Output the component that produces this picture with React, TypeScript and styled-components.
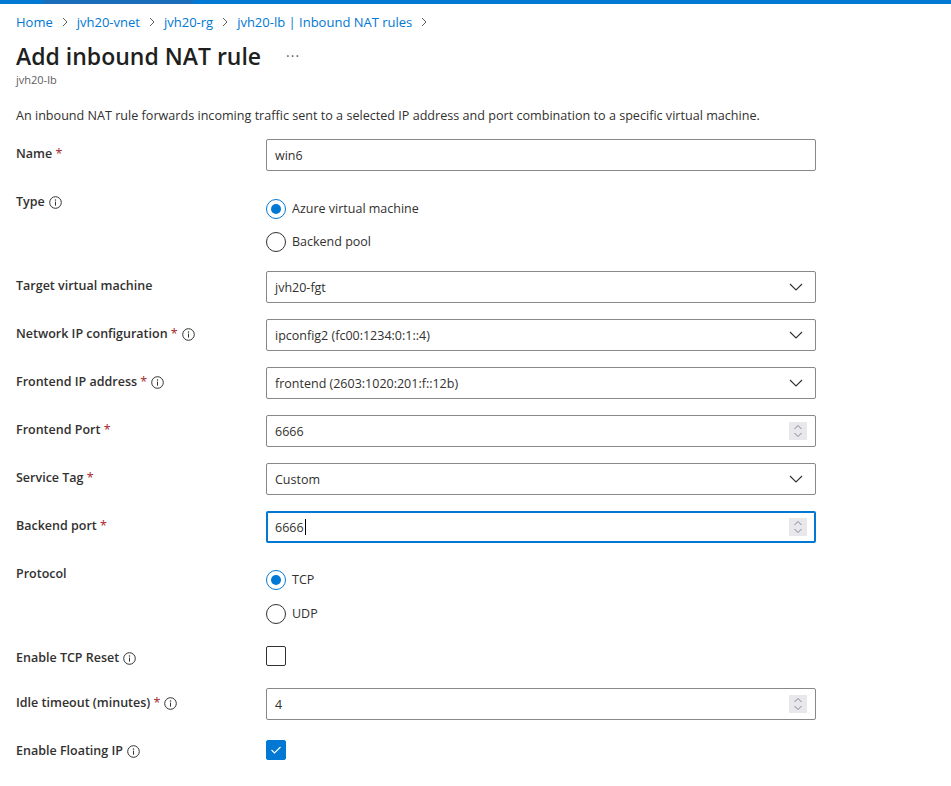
import React from "react";
import styled, { createGlobalStyle } from "styled-components";

const Global = createGlobalStyle`
  html, body { margin: 0; padding: 0; background: #fff; }
  body { font-family: "Segoe UI", "Open Sans", sans-serif; color: #323130; }
  * { box-sizing: border-box; }
`;

const TopBar = styled.div`
  height: 4px;
  background: #0078d4;
  display: flex;
`;
const Progress = styled.div`
  margin-left: 43px;
  width: 150px;
  background: #1a6dbb;
`;

const Page = styled.div`
  padding: 0 16px;
`;

const Crumbs = styled.nav`
  margin-top: 8px;
  height: 20px;
  display: flex;
  align-items: center;
  gap: 8px;
  font-size: 13px;
  line-height: 20px;
`;
const Crumb = styled.span`
  color: #0078d4;
`;
const Sep = styled.svg`
  width: 8px;
  height: 10px;
  flex: none;
`;

const TitleRow = styled.div`
  margin-top: 8px;
  display: flex;
  align-items: center;
  height: 32px;
`;
const Title = styled.h1`
  margin: 0;
  font-size: 23px;
  font-weight: 600;
  line-height: 32px;
  color: #201f1e;
`;
const More = styled.span`
  margin-left: 25px;
  font-size: 14px;
  color: #605e5c;
  letter-spacing: 1px;
  line-height: 20px;
  position: relative;
  top: -4px;
`;
const Sub = styled.div`
  font-size: 11px;
  line-height: 16px;
  color: #605e5c;
`;
const Desc = styled.p`
  margin: 18px 0 0;
  font-size: 12.6px;
  line-height: 20px;
  color: #323130;
`;

const Form = styled.div`
  margin-top: 13px;
  display: grid;
  grid-template-columns: 250px 550px;
  row-gap: 16px;
`;
const Label = styled.div`
  padding-top: 5px;
  font-size: 12.5px;
  line-height: 20px;
  font-weight: 600;
  color: #323130;
  display: flex;
  align-items: center;
  gap: 4px;
  align-self: start;
`;
const Req = styled.span`
  color: #a4262c;
  font-weight: 400;
`;

const Field = styled.div<{ $focus?: boolean }>`
  height: 32px;
  border: ${(p) => (p.$focus ? "2px solid #0078d4" : "1px solid #8a8886")};
  border-radius: 2px;
  display: flex;
  align-items: center;
  padding: 0 ${(p) => (p.$focus ? "7px" : "8px")};
  font-size: 12.5px;
  color: #323130;
`;
const Value = styled.span`
  flex: 1;
  display: flex;
  align-items: center;
`;
const Caret = styled.span`
  display: inline-block;
  width: 1px;
  height: 16px;
  background: #000;
  margin-left: 1px;
`;
const Spin = styled.span`
  width: 18px;
  height: 18px;
  background: #e8e8ec;
  display: flex;
  align-items: center;
  justify-content: center;
`;
const Chevron = styled.svg`
  width: 14px;
  height: 8px;
  margin-right: 4px;
`;

const RadioGroup = styled.div<{ $top: number; $gap: number; $bottom: number }>`
  padding-top: ${(p) => p.$top}px;
  padding-bottom: ${(p) => p.$bottom}px;
  display: flex;
  flex-direction: column;
  gap: ${(p) => p.$gap}px;
`;
const RadioItem = styled.label`
  display: flex;
  align-items: center;
  gap: 6px;
  font-size: 12.5px;
  line-height: 20px;
  color: #323130;
`;
const RadioDot = styled.span<{ $on?: boolean }>`
  width: 20px;
  height: 20px;
  border-radius: 50%;
  border: 1px solid ${(p) => (p.$on ? "#0078d4" : "#323130")};
  display: flex;
  align-items: center;
  justify-content: center;
  &::after {
    content: "";
    width: 10px;
    height: 10px;
    border-radius: 50%;
    background: ${(p) => (p.$on ? "#0078d4" : "transparent")};
  }
`;

const CheckWrap = styled.div<{ $top: number; $bottom: number }>`
  padding-top: ${(p) => p.$top}px;
  padding-bottom: ${(p) => p.$bottom}px;
`;
const Box = styled.span<{ $on?: boolean }>`
  width: 20px;
  height: 20px;
  border-radius: 2px;
  border: 1px solid ${(p) => (p.$on ? "#0078d4" : "#323130")};
  background: ${(p) => (p.$on ? "#0078d4" : "#fff")};
  display: flex;
  align-items: center;
  justify-content: center;
`;

const Info = () => (
  <svg width="13" height="13" viewBox="0 0 13 13" style={{ flex: "none" }}>
    <circle cx="6.5" cy="6.5" r="5.8" fill="none" stroke="#323130" strokeWidth="1" />
    <circle cx="6.5" cy="4" r="0.75" fill="#323130" />
    <rect x="6" y="5.6" width="1" height="4" fill="#323130" />
  </svg>
);

const SepIcon = () => (
  <Sep viewBox="0 0 8 10">
    <path d="M2 1 L6 5 L2 9" fill="none" stroke="#605e5c" strokeWidth="1" />
  </Sep>
);

const Down = () => (
  <Chevron viewBox="0 0 14 8">
    <path d="M1 1 L7 7 L13 1" fill="none" stroke="#323130" strokeWidth="1.1" />
  </Chevron>
);

const Spinner = () => (
  <Spin>
    <svg width="10" height="14" viewBox="0 0 10 14">
      <path d="M1.5 5 L5 1.5 L8.5 5" fill="none" stroke="#8a8886" strokeWidth="1" />
      <path d="M1.5 9 L5 12.5 L8.5 9" fill="none" stroke="#8a8886" strokeWidth="1" />
    </svg>
  </Spin>
);

type LabelProps = { text: string; req?: boolean; info?: boolean };
const FieldLabel = ({ text, req, info }: LabelProps) => (
  <Label>
    <span>
      {text}
      {req && <Req> *</Req>}
    </span>
    {info && <Info />}
  </Label>
);

export default function App() {
  return (
    <>
      <Global />
      <TopBar>
        <Progress />
      </TopBar>
      <Page>
        <Crumbs>
          <Crumb>Home</Crumb>
          <SepIcon />
          <Crumb>jvh20-vnet</Crumb>
          <SepIcon />
          <Crumb>jvh20-rg</Crumb>
          <SepIcon />
          <Crumb>jvh20-lb | Inbound NAT rules</Crumb>
          <SepIcon />
        </Crumbs>
        <TitleRow>
          <Title>Add inbound NAT rule</Title>
          <More>...</More>
        </TitleRow>
        <Sub>jvh20-lb</Sub>
        <Desc>
          An inbound NAT rule forwards incoming traffic sent to a selected IP address and port combination to a specific virtual machine.
        </Desc>
        <Form>
          <FieldLabel text="Name" req />
          <Field>
            <Value>win6</Value>
          </Field>

          <FieldLabel text="Type" info />
          <RadioGroup $top={12} $gap={13} $bottom={3}>
            <RadioItem>
              <RadioDot $on />
              Azure virtual machine
            </RadioItem>
            <RadioItem>
              <RadioDot />
              Backend pool
            </RadioItem>
          </RadioGroup>

          <FieldLabel text="Target virtual machine" />
          <Field>
            <Value>jvh20-fgt</Value>
            <Down />
          </Field>

          <FieldLabel text="Network IP configuration" req info />
          <Field>
            <Value>ipconfig2 (fc00:1234:0:1::4)</Value>
            <Down />
          </Field>

          <FieldLabel text="Frontend IP address" req info />
          <Field>
            <Value>frontend (2603:1020:201:f::12b)</Value>
            <Down />
          </Field>

          <FieldLabel text="Frontend Port" req />
          <Field>
            <Value>6666</Value>
            <Spinner />
          </Field>

          <FieldLabel text="Service Tag" req />
          <Field>
            <Value>Custom</Value>
            <Down />
          </Field>

          <FieldLabel text="Backend port" req />
          <Field $focus>
            <Value>
              6666
              <Caret />
            </Value>
            <Spinner />
          </Field>

          <FieldLabel text="Protocol" />
          <RadioGroup $top={11} $gap={14} $bottom={3}>
            <RadioItem>
              <RadioDot $on />
              TCP
            </RadioItem>
            <RadioItem>
              <RadioDot />
              UDP
            </RadioItem>
          </RadioGroup>

          <FieldLabel text="Enable TCP Reset" info />
          <CheckWrap $top={3} $bottom={6}>
            <Box />
          </CheckWrap>

          <FieldLabel text="Idle timeout (minutes)" req info />
          <Field>
            <Value>4</Value>
            <Spinner />
          </Field>

          <FieldLabel text="Enable Floating IP" info />
          <CheckWrap $top={4} $bottom={4}>
            <Box $on>
              <svg width="12" height="10" viewBox="0 0 12 10">
                <path d="M1.5 5 L4.5 8 L10.5 2" fill="none" stroke="#fff" strokeWidth="1.1" />
              </svg>
            </Box>
          </CheckWrap>
        </Form>
      </Page>
    </>
  );
}
